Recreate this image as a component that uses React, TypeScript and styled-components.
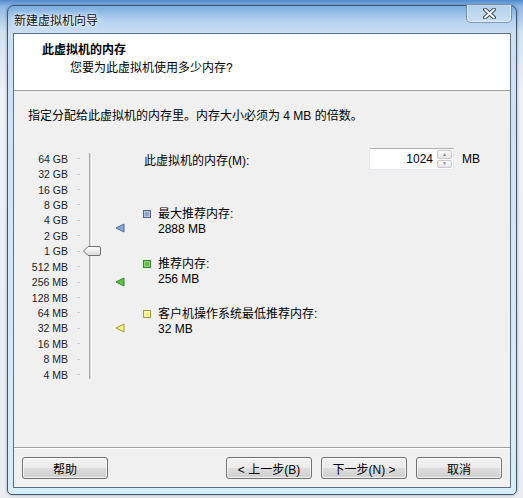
import styled, { createGlobalStyle } from "styled-components";

const FONT = `"Liberation Sans", "Noto Sans CJK SC", sans-serif`;
const ROW = 15.43;
const SCALE_TOP = 7;

const scaleLabels = [
  "64 GB", "32 GB", "16 GB", "8 GB", "4 GB", "2 GB", "1 GB",
  "512 MB", "256 MB", "128 MB", "64 MB", "32 MB", "16 MB", "8 MB", "4 MB",
];

interface Marker {
  mb: number;
  title: string;
  fill: string;
  stroke: string;
}

const markers: Marker[] = [
  { mb: 2888, title: "最大推荐内存:", fill: "#8ea6d2", stroke: "#4a6aa0" },
  { mb: 256, title: "推荐内存:", fill: "#5cc443", stroke: "#2b8a24" },
  { mb: 32, title: "客户机操作系统最低推荐内存:", fill: "#f6f27a", stroke: "#a39a3a" },
];

// 64 GB 를 0 으로 두고 아래로 내려갈수록 절반
const rowCenter = (mb: number) =>
  SCALE_TOP + (Math.log2(65536 / mb) + 0.5) * ROW;

const GlobalStyle = createGlobalStyle`
  html, body {
    margin: 0;
    padding: 0;
  }
  body {
    width: 523px;
    height: 498px;
    overflow: hidden;
    font-family: ${FONT};
    font-size: 12px;
    color: #000;
  }
`;

const Desktop = styled.div`
  width: 523px;
  height: 498px;
  box-sizing: border-box;
  padding: 5px 6px 3px 7px;
  background: linear-gradient(
    180deg,
    #4f8bd0 0px,
    #8db7e4 6px,
    #d3e2f1 32px,
    #eef1f5 90px,
    #e9ecf0 100%
  );
`;

const Window = styled.div`
  width: 510px;
  height: 490px;
  box-sizing: border-box;
  display: flex;
  flex-direction: column;
  padding: 0 5px 6px 5px;
  border: 1px solid #3f5673;
  border-radius: 7px 7px 5px 5px;
  background: linear-gradient(
    180deg,
    #79acdf 0px,
    #b3d1ef 14px,
    #cde0f3 28px,
    #d2e5f4 200px,
    #d6eef7 100%
  );
  box-shadow: 0 0 3px rgba(0, 0, 0, 0.35);
`;

const TitleBar = styled.div`
  height: 27px;
  display: flex;
  align-items: center;
  justify-content: space-between;
`;

const TitleText = styled.span`
  padding-left: 1px;
  font-size: 12px;
  color: #111;
  text-shadow: 0 0 6px #fff, 0 0 3px #fff;
`;

const CloseButton = styled.div`
  align-self: flex-start;
  margin-top: -1px;
  margin-right: -1px;
  width: 46px;
  height: 18px;
  box-sizing: border-box;
  display: flex;
  align-items: center;
  justify-content: center;
  border: 1px solid rgba(60, 85, 120, 0.55);
  border-top: none;
  border-radius: 0 0 5px 5px;
  background: linear-gradient(
    180deg,
    rgba(255, 255, 255, 0.45),
    rgba(210, 228, 245, 0.55)
  );
  box-shadow: inset 0 0 0 1px rgba(255, 255, 255, 0.5);
`;

const Client = styled.div`
  flex: 1;
  display: flex;
  flex-direction: column;
  border: 1px solid #5d6f84;
  background: #f0f0f0;
`;

const Header = styled.div`
  height: 57px;
  box-sizing: border-box;
  padding: 9px 0 0 28px;
  background: #fff;
  border-bottom: 1px solid #a0a0a0;
  line-height: 14px;
`;

const HeaderTitle = styled.div`
  font-weight: bold;
`;

const HeaderSub = styled.div`
  margin: 4px 0 0 28px;
`;

const Body = styled.div`
  flex: 1;
  padding: 18px 0 0 14px;
`;

const Instruction = styled.div`
  line-height: 14px;
`;

const Main = styled.div`
  margin-top: 21px;
  display: flex;
`;

const ScalePanel = styled.div`
  position: relative;
  width: 115px;
  box-sizing: border-box;
  padding-top: ${SCALE_TOP}px;
  display: flex;
  align-items: flex-start;
`;

const LabelCol = styled.div`
  display: flex;
  flex-direction: column;
`;

const ScaleRow = styled.div`
  height: ${ROW}px;
  display: flex;
  align-items: center;
`;

const ScaleLabel = styled.span`
  width: 40px;
  text-align: right;
  font-size: 10.5px;
  color: #222;
`;

const Tick = styled.span`
  width: 3px;
  height: 1px;
  margin-left: 9px;
  background: #cdcdcd;
`;

const Track = styled.div`
  margin: 2px 0 0 9px;
  width: 1px;
  height: 226px;
  border-left: 1px solid #a8a8a8;
  border-right: 1px solid #fff;
  background: #dcdcdc;
`;

const Thumb = styled.svg`
  position: absolute;
  left: 55px;
`;

const MarkerIcon = styled.svg`
  position: absolute;
  left: 87px;
`;

const RightPanel = styled.div`
  padding-top: 4px;
  display: flex;
  flex-direction: column;
`;

const MemRow = styled.div`
  height: 22px;
  display: flex;
  align-items: center;
`;

const MemLabel = styled.span`
  width: 225px;
  padding-left: 1px;
`;

const InputBox = styled.div`
  width: 85px;
  height: 22px;
  box-sizing: border-box;
  display: flex;
  border: 1px solid #e3e9ef;
  border-top-color: #abadb3;
  background: #fff;
`;

const InputValue = styled.span`
  flex: 1;
  padding-right: 4px;
  text-align: right;
  line-height: 20px;
`;

const Spinner = styled.div`
  width: 15px;
  display: flex;
  flex-direction: column;
  gap: 1px;
  padding: 1px 1px 1px 0;
`;

const SpinButton = styled.div`
  flex: 1;
  display: flex;
  align-items: center;
  justify-content: center;
  border: 1px solid #c9c9c9;
  border-radius: 2px;
  background: linear-gradient(180deg, #fafafa, #e6e6e6);
  font-size: 5px;
  color: #8a8a8a;
  line-height: 1;
`;

const Unit = styled.span`
  margin-left: 8px;
`;

const Legend = styled.div`
  margin-top: 37px;
  display: flex;
  flex-direction: column;
  gap: 20px;
`;

const LegendItem = styled.div`
  display: flex;
  align-items: flex-start;
  line-height: 15px;
`;

const Swatch = styled.span<{ fill: string; stroke: string }>`
  width: 8px;
  height: 8px;
  margin-top: 3px;
  box-sizing: border-box;
  border: 1px solid ${(p) => p.stroke};
  background: ${(p) => p.fill};
  box-shadow: inset 0 0 0 1px rgba(255, 255, 255, 0.35);
`;

const LegendText = styled.div`
  margin-left: 7px;
`;

const Footer = styled.div`
  display: flex;
  align-items: center;
  gap: 9px;
  padding: 9px 8px 8px 8px;
  border-top: 1px solid #a0a0a0;
  box-shadow: inset 0 1px 0 #fff;
`;

const Spacer = styled.div`
  flex: 1;
`;

const Button = styled.button`
  width: 86px;
  height: 22px;
  padding: 0;
  border: 1px solid #707070;
  border-radius: 3px;
  background: linear-gradient(
    180deg,
    #f2f2f2 0%,
    #ebebeb 48%,
    #dddddd 52%,
    #cfcfcf 100%
  );
  box-shadow: inset 0 0 0 1px rgba(255, 255, 255, 0.75);
  font-family: ${FONT};
  font-size: 12px;
  color: #000;
`;

const markerSize = 10;

export default function App() {
  const thumbTop = rowCenter(1024) - 5;

  return (
    <Desktop>
      <GlobalStyle />
      <Window>
        <TitleBar>
          <TitleText>新建虚拟机向导</TitleText>
          <CloseButton>
            <svg width="13" height="11" viewBox="0 0 13 11">
              <path
                d="M2 1.5 L11 9.5 M11 1.5 L2 9.5"
                stroke="#3b4a5e"
                strokeWidth="4"
                strokeLinecap="round"
              />
              <path
                d="M2 1.5 L11 9.5 M11 1.5 L2 9.5"
                stroke="#fff"
                strokeWidth="2"
                strokeLinecap="round"
              />
            </svg>
          </CloseButton>
        </TitleBar>

        <Client>
          <Header>
            <HeaderTitle>此虚拟机的内存</HeaderTitle>
            <HeaderSub>您要为此虚拟机使用多少内存?</HeaderSub>
          </Header>

          <Body>
            <Instruction>
              指定分配给此虚拟机的内存里。内存大小必须为 4 MB 的倍数。
            </Instruction>

            <Main>
              <ScalePanel>
                <LabelCol>
                  {scaleLabels.map((label) => (
                    <ScaleRow key={label}>
                      <ScaleLabel>{label}</ScaleLabel>
                      <Tick />
                    </ScaleRow>
                  ))}
                </LabelCol>
                <Track />

                <Thumb
                  width="18"
                  height="10"
                  viewBox="0 0 18 10"
                  style={{ top: thumbTop }}
                >
                  <defs>
                    <linearGradient id="thumbGrad" x1="0" y1="0" x2="0" y2="1">
                      <stop offset="0" stopColor="#ffffff" />
                      <stop offset="1" stopColor="#dadada" />
                    </linearGradient>
                  </defs>
                  <path
                    d="M0.5 5 L5 0.5 H16 Q17.5 0.5 17.5 2 V8 Q17.5 9.5 16 9.5 H5 Z"
                    fill="url(#thumbGrad)"
                    stroke="#6f6f6f"
                  />
                </Thumb>

                {markers.map((m) => (
                  <MarkerIcon
                    key={m.mb}
                    width={markerSize}
                    height={markerSize}
                    viewBox="0 0 10 10"
                    style={{ top: rowCenter(m.mb) - markerSize / 2 }}
                  >
                    <polygon
                      points="1,5 9,1 9,9"
                      fill={m.fill}
                      stroke={m.stroke}
                      strokeLinejoin="round"
                    />
                  </MarkerIcon>
                ))}
              </ScalePanel>

              <RightPanel>
                <MemRow>
                  <MemLabel>此虚拟机的内存(M):</MemLabel>
                  <InputBox>
                    <InputValue>1024</InputValue>
                    <Spinner>
                      <SpinButton>▲</SpinButton>
                      <SpinButton>▼</SpinButton>
                    </Spinner>
                  </InputBox>
                  <Unit>MB</Unit>
                </MemRow>

                <Legend>
                  {markers.map((m) => (
                    <LegendItem key={m.mb}>
                      <Swatch fill={m.fill} stroke={m.stroke} />
                      <LegendText>
                        <div>{m.title}</div>
                        <div>{m.mb} MB</div>
                      </LegendText>
                    </LegendItem>
                  ))}
                </Legend>
              </RightPanel>
            </Main>
          </Body>

          <Footer>
            <Button>帮助</Button>
            <Spacer />
            <Button>&lt; 上一步(B)</Button>
            <Button>下一步(N) &gt;</Button>
            <Button>取消</Button>
          </Footer>
        </Client>
      </Window>
    </Desktop>
  );
}
